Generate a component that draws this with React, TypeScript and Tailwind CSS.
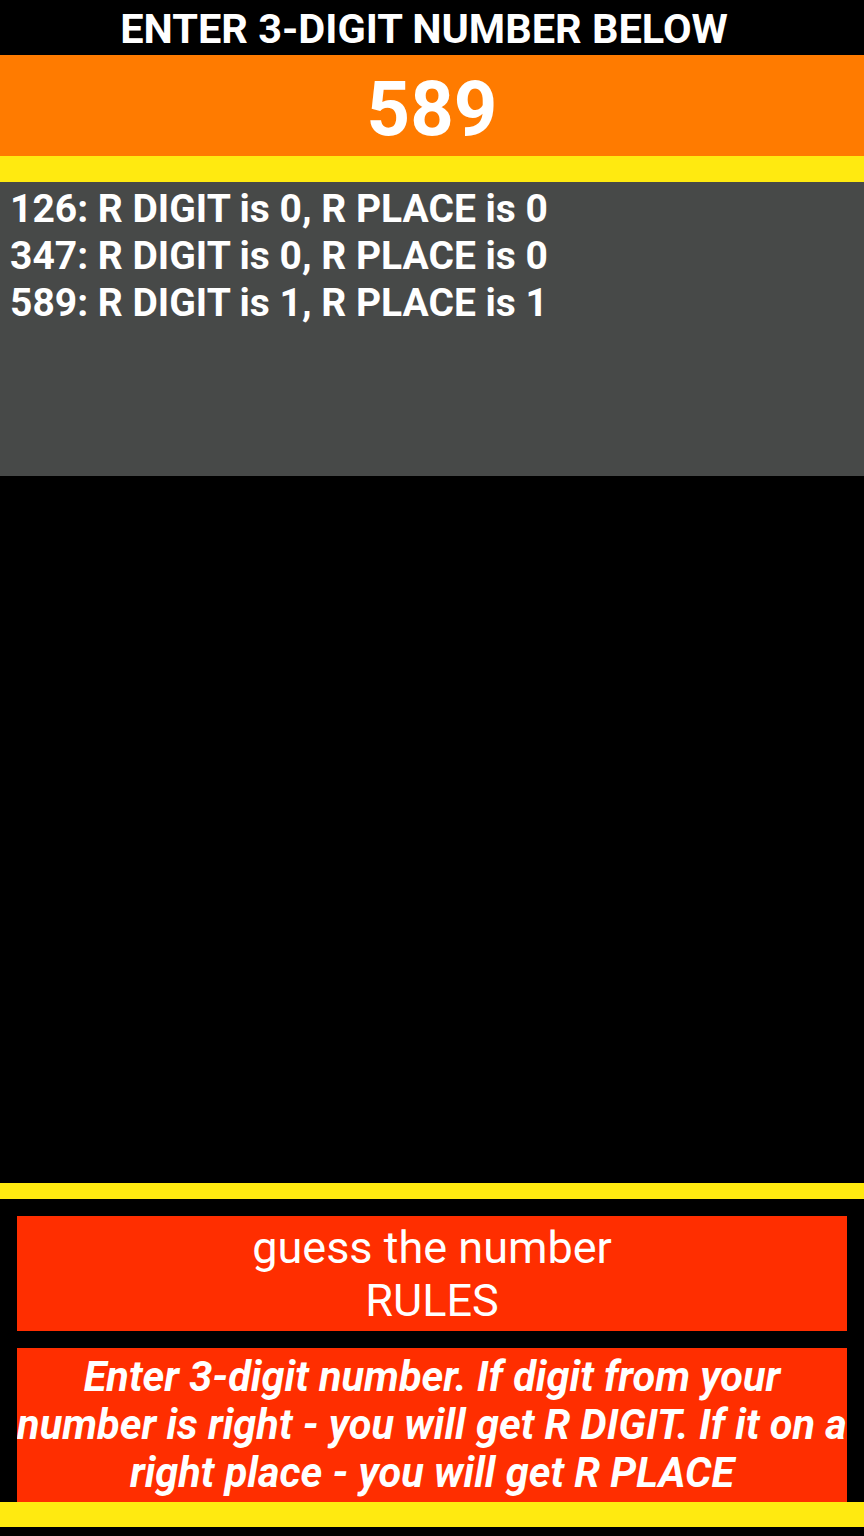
const guesses = [
  { num: '126', digit: 0, place: 0 },
  { num: '347', digit: 0, place: 0 },
  { num: '589', digit: 1, place: 1 },
];

export default function App() {
  return (
    <div className="flex h-[1536px] w-full flex-col bg-black font-['Roboto','Liberation_Sans',sans-serif] text-white">
      {/* title */}
      <div className="flex h-[55px] items-center justify-center pt-[3px] pr-[16px] text-[41.5px] font-bold">
        ENTER 3-DIGIT NUMBER BELOW
      </div>

      {/* current input */}
      <div className="flex h-[101px] items-center justify-center bg-[#ff7b00] pt-[6px] text-[76px] font-bold">
        589
      </div>
      <div className="h-[26px] bg-[#ffea10]" />

      {/* guess history */}
      <div className="h-[294px] bg-[#474948] px-[10px] pt-[4px] text-[39px] font-bold leading-[47px]">
        {guesses.map((g) => (
          <div key={g.num} className="whitespace-nowrap">
            {g.num}: R DIGIT is {g.digit}, R PLACE is {g.place}
          </div>
        ))}
      </div>

      <div className="flex-1" />

      <div className="h-[16px] bg-[#ffea10]" />

      {/* rules */}
      <div className="mx-[17px] mt-[17px] flex h-[115px] flex-col items-center justify-center bg-[#ff2e00] text-[45px] leading-[53px]">
        <span>guess the number</span>
        <span>RULES</span>
      </div>
      <div className="mx-[17px] mt-[17px] h-[154px] overflow-hidden bg-[#ff2e00] pt-[5px] text-center text-[41.5px] font-bold italic leading-[48px]">
        <div className="whitespace-nowrap">Enter 3-digit number. If digit from your</div>
        <div className="whitespace-nowrap">number is right - you will get R DIGIT. If it on a</div>
        <div className="whitespace-nowrap">right place - you will get R PLACE</div>
      </div>
      <div className="h-[25px] bg-[#ffea10]" />
      <div className="h-[9px]" />
    </div>
  );
}
